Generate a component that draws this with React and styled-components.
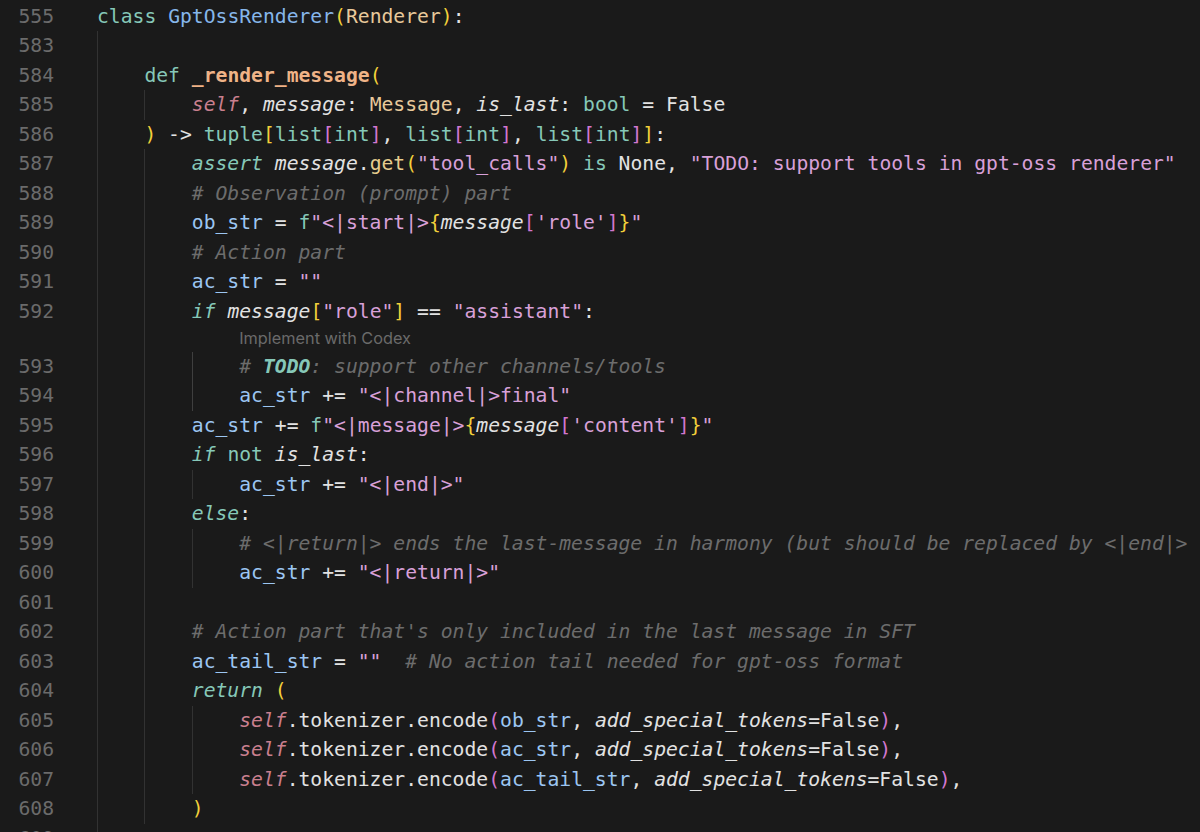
import React from "react";
import styled, { createGlobalStyle } from "styled-components";

const Global = createGlobalStyle`
  html, body { margin: 0; padding: 0; background: #1a1a1a; }
  body { overflow: hidden; }
`;

const C = {
  plain: "#e2e2e2",
  kw: "#86c8b8",
  cls: "#86b6ea",
  fn: "#efb387",
  base: "#e8c99a",
  b1: "#f2d03a",
  b2: "#d277d0",
  self: "#c97f8e",
  str: "#d8a0d8",
  vr: "#9cc6f2",
  cm: "#6c6c6c",
  method: "#e6cc8e",
};

const Editor = styled.div`
  width: 1200px;
  height: 832px;
  overflow: hidden;
  background: #1a1a1a;
  display: flex;
  flex-direction: column;
  font-family: "DejaVu Sans Mono", "Liberation Mono", monospace;
  font-size: 19.7px;
  color: ${C.plain};
`;

const Sticky = styled.div`
  height: 31px;
  display: flex;
  flex-direction: column;
  justify-content: flex-end;
  flex-shrink: 0;
`;

const Row = styled.div`
  display: flex;
  height: ${(p) => p.$h || 29.5}px;
  line-height: ${(p) => p.$h || 29.5}px;
  flex-shrink: 0;
  align-items: stretch;
`;

const LineNo = styled.div`
  width: 54px;
  text-align: right;
  color: #6b6b6b;
  flex-shrink: 0;
`;

const CodeCell = styled.div`
  display: flex;
  align-items: stretch;
  margin-left: 43px;
  white-space: pre;
  flex: 1;
  min-width: 0;
`;

const Indent = styled.span`
  display: block;
  width: 4ch;
  flex-shrink: 0;
  box-sizing: border-box;
  border-left: 1px solid ${(p) => (p.$guide ? (p.$active ? "#3f3f3f" : "#323232") : "transparent")};
`;

const Tok = styled.span`
  color: ${(p) => C[p.$c] || C.plain};
  font-style: ${(p) => (p.$i ? "italic" : "normal")};
  font-weight: ${(p) => (p.$b ? "bold" : "normal")};
`;

const Lens = styled.span`
  font-family: Inter, "Open Sans", sans-serif;
  font-size: 16.3px;
  color: #6a6a6a;
  line-height: 25.5px;
`;

// token helpers
const t = (text, c = "plain", i = false, b = false) => ({ text, c, i, b });
const P = (s) => t(s);
const KW = (s) => t(s, "kw");
const KWI = (s) => t(s, "kw", true);
const S = (s) => t(s, "str");
const V = (s) => t(s, "vr");
const CM = (s) => t(s, "cm", true);
const PAR = (s) => t(s, "plain", true);
const B1 = (s) => t(s, "b1");
const B2 = (s) => t(s, "b2");
const SELF = () => t("self", "self", true);

const encodeLine = (arg) => [
  SELF(), P("."), P("tokenizer"), P("."), P("encode"), B2("("), V(arg), P(", "),
  PAR("add_special_tokens"), P("=False"), B2(")"), P(","),
];

const lines = [
  { n: 583, ind: 0, guides: 1, toks: [] },
  { n: 584, ind: 1, toks: [KW("def"), P(" "), t("_render_message", "fn", false, true), B1("(")] },
  { n: 585, ind: 2, toks: [SELF(), P(", "), PAR("message"), P(": "), t("Message", "base"), P(", "), PAR("is_last"), P(": "), KW("bool"), P(" = False")] },
  { n: 586, ind: 1, toks: [B1(")"), P(" -> "), KW("tuple"), B1("["), KW("list"), B2("["), KW("int"), B2("]"), P(", "), KW("list"), B2("["), KW("int"), B2("]"), P(", "), KW("list"), B2("["), KW("int"), B2("]"), B1("]"), P(":")] },
  { n: 587, ind: 2, toks: [KWI("assert"), P(" "), PAR("message"), P("."), t("get", "method"), B1("("), S('"tool_calls"'), B1(")"), P(" "), KW("is"), P(" None, "), S('"TODO: support tools in gpt-oss renderer"')] },
  { n: 588, ind: 2, toks: [CM("# Observation (prompt) part")] },
  { n: 589, ind: 2, toks: [V("ob_str"), P(" = "), KW("f"), S('"<|start|>'), B1("{"), PAR("message"), B2("["), S("'role'"), B2("]"), B1("}"), S('"')] },
  { n: 590, ind: 2, toks: [CM("# Action part")] },
  { n: 591, ind: 2, toks: [V("ac_str"), P(" = "), S('""')] },
  { n: 592, ind: 2, toks: [KWI("if"), P(" "), PAR("message"), B1("["), S('"role"'), B1("]"), P(" == "), S('"assistant"'), P(":")] },
  { lens: "Implement with Codex", guides: 2, ind: 3 },
  { n: 593, ind: 3, active: true, toks: [CM("# "), t("TODO", "kw", true, true), CM(": support other channels/tools")] },
  { n: 594, ind: 3, active: true, toks: [V("ac_str"), P(" += "), S('"<|channel|>final"')] },
  { n: 595, ind: 2, toks: [V("ac_str"), P(" += "), KW("f"), S('"<|message|>'), B1("{"), PAR("message"), B2("["), S("'content'"), B2("]"), B1("}"), S('"')] },
  { n: 596, ind: 2, toks: [KWI("if"), P(" "), KW("not"), P(" "), PAR("is_last"), P(":")] },
  { n: 597, ind: 3, toks: [V("ac_str"), P(" += "), S('"<|end|>"')] },
  { n: 598, ind: 2, toks: [KWI("else"), P(":")] },
  { n: 599, ind: 3, toks: [CM("# <|return|> ends the last-message in harmony (but should be replaced by <|end|>")] },
  { n: 600, ind: 3, toks: [V("ac_str"), P(" += "), S('"<|return|>"')] },
  { n: 601, ind: 0, guides: 2, toks: [] },
  { n: 602, ind: 2, toks: [CM("# Action part that's only included in the last message in SFT")] },
  { n: 603, ind: 2, toks: [V("ac_tail_str"), P(" = "), S('""'), P("  "), CM("# No action tail needed for gpt-oss format")] },
  { n: 604, ind: 2, toks: [KWI("return"), P(" "), B1("(")] },
  { n: 605, ind: 3, toks: encodeLine("ob_str") },
  { n: 606, ind: 3, toks: encodeLine("ac_str") },
  { n: 607, ind: 3, toks: encodeLine("ac_tail_str") },
  { n: 608, ind: 2, toks: [B1(")")] },
  { n: 609, ind: 0, guides: 1, toks: [] },
];

function Tokens({ toks }) {
  return toks.map((k, i) => (
    <Tok key={i} $c={k.c} $i={k.i} $b={k.b}>
      {k.text}
    </Tok>
  ));
}

function Indents({ count, guides, active }) {
  const arr = [];
  for (let i = 0; i < count; i++) {
    arr.push(<Indent key={i} $guide={i < guides} $active={active && i === guides - 1} />);
  }
  return arr;
}

function Line({ line }) {
  if (line.lens) {
    return (
      <Row $h={25.5}>
        <LineNo />
        <CodeCell>
          <Indents count={line.ind} guides={line.guides} />
          <Lens>{line.lens}</Lens>
        </CodeCell>
      </Row>
    );
  }
  const guides = line.guides !== undefined ? line.guides : line.ind;
  const count = Math.max(line.ind, guides);
  return (
    <Row>
      <LineNo>{line.n}</LineNo>
      <CodeCell>
        <Indents count={count} guides={guides} active={line.active} />
        <span>
          <Tokens toks={line.toks} />
        </span>
      </CodeCell>
    </Row>
  );
}

export default function App() {
  return (
    <>
      <Global />
      <Editor>
        <Sticky>
          <Row>
            <LineNo>555</LineNo>
            <CodeCell>
              <Tokens toks={[KW("class"), P(" "), t("GptOssRenderer", "cls"), B1("("), t("Renderer", "base"), B1(")"), P(":")]} />
            </CodeCell>
          </Row>
        </Sticky>
        {lines.map((l, i) => (
          <Line key={i} line={l} />
        ))}
      </Editor>
    </>
  );
}
